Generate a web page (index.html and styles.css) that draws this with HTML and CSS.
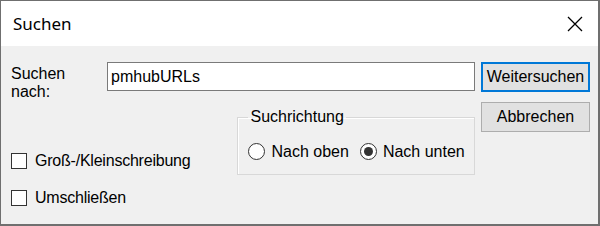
FILE: index.html
```html
<!DOCTYPE html>
<html lang="de">
<head>
<meta charset="utf-8">
<title>Suchen</title>
<link rel="stylesheet" href="styles.css">
</head>
<body>
<div class="window">
  <div class="titlebar">
    <span class="title">Suchen</span>
    <svg class="close" width="16" height="16" viewBox="0 0 16 16" aria-hidden="true">
      <path d="M1 1 L15 15 M15 1 L1 15" stroke="#000" stroke-width="1.3" fill="none"/>
    </svg>
  </div>
  <div class="content">
    <div class="main">
      <div class="row1">
        <label class="find-label" for="q">Suchen<br>nach:</label>
        <div class="textbox" id="q">pmhubURLs</div>
      </div>
      <div class="lower">
        <div class="checks">
          <div class="check"><span class="box"></span><span>Groß-/Kleinschreibung</span></div>
          <div class="check"><span class="box"></span><span>Umschließen</span></div>
        </div>
        <fieldset class="group">
          <legend>Suchrichtung</legend>
          <div class="radios">
            <div class="radio"><span class="circle"></span><span>Nach oben</span></div>
            <div class="radio"><span class="circle checked"></span><span>Nach unten</span></div>
          </div>
        </fieldset>
      </div>
    </div>
    <div class="buttons">
      <div class="btn default">Weitersuchen</div>
      <div class="btn">Abbrechen</div>
    </div>
  </div>
</div>
</body>
</html>
```
FILE: styles.css
```css
html, body {
  margin: 0;
  padding: 0;
  background: #f0f0f0;
}
.window {
  box-sizing: border-box;
  width: 600px;
  height: 226px;
  border: 1px solid #6f6f6f;
  border-right-width: 2px;
  border-bottom-width: 2px;
  background: #f0f0f0;
  font-family: "Liberation Sans", Arial, sans-serif;
  font-size: 16px;
  color: #000;
}
.titlebar {
  height: 45px;
  background: #fff;
  display: flex;
  align-items: center;
  justify-content: space-between;
  padding: 0 15px 0 12px;
}
.title {
  font-family: "Noto Sans", "Open Sans", sans-serif;
  font-size: 17px;
  margin-top: -1px;
}
.close {
  display: block;
}
.content {
  display: flex;
  padding: 16px 0 0 10px;
}
.main {
  width: 464px;
}
.row1 {
  display: flex;
  align-items: flex-start;
}
.find-label {
  width: 96px;
  line-height: 18px;
  margin-top: 3px;
}
.textbox {
  box-sizing: border-box;
  width: 368px;
  height: 29px;
  background: #fff;
  border: 1px solid #7a7a7a;
  line-height: 27px;
  padding-left: 3px;
}
.lower {
  display: flex;
  align-items: flex-start;
  margin-top: 7px;
}
.checks {
  width: 227px;
  padding-top: 45px;
  display: flex;
  flex-direction: column;
  gap: 21px;
}
.check {
  display: flex;
  align-items: center;
  gap: 8px;
  height: 16px;
  line-height: 16px;
  letter-spacing: -0.22px;
}
.box {
  box-sizing: border-box;
  width: 16px;
  height: 16px;
  border: 1px solid #333;
  background: #fff;
}
.group {
  box-sizing: border-box;
  width: 238px;
  margin: 0;
  padding: 17px 8px 14px 10px;
  border: 1px solid #d8d8d8;
  box-shadow: inset 1px 1px 0 #fff;
}
.group legend {
  padding: 0 2px;
  line-height: 18px;
}
.radios {
  display: flex;
  gap: 11px;
}
.radio {
  display: flex;
  align-items: center;
  gap: 6px;
  height: 17px;
}
.circle {
  box-sizing: border-box;
  width: 17px;
  height: 17px;
  border: 1px solid #333;
  border-radius: 50%;
  background: #fff;
  display: flex;
  align-items: center;
  justify-content: center;
}
.circle.checked::after {
  content: "";
  width: 9px;
  height: 9px;
  border-radius: 50%;
  background: #333;
}
.buttons {
  margin-left: 6px;
  width: 109px;
  display: flex;
  flex-direction: column;
  gap: 10px;
}
.btn {
  box-sizing: border-box;
  height: 30px;
  border: 1px solid #adadad;
  background: #e1e1e1;
  display: flex;
  align-items: center;
  justify-content: center;
}
.btn.default {
  border: 2px solid #0078d7;
}
```
